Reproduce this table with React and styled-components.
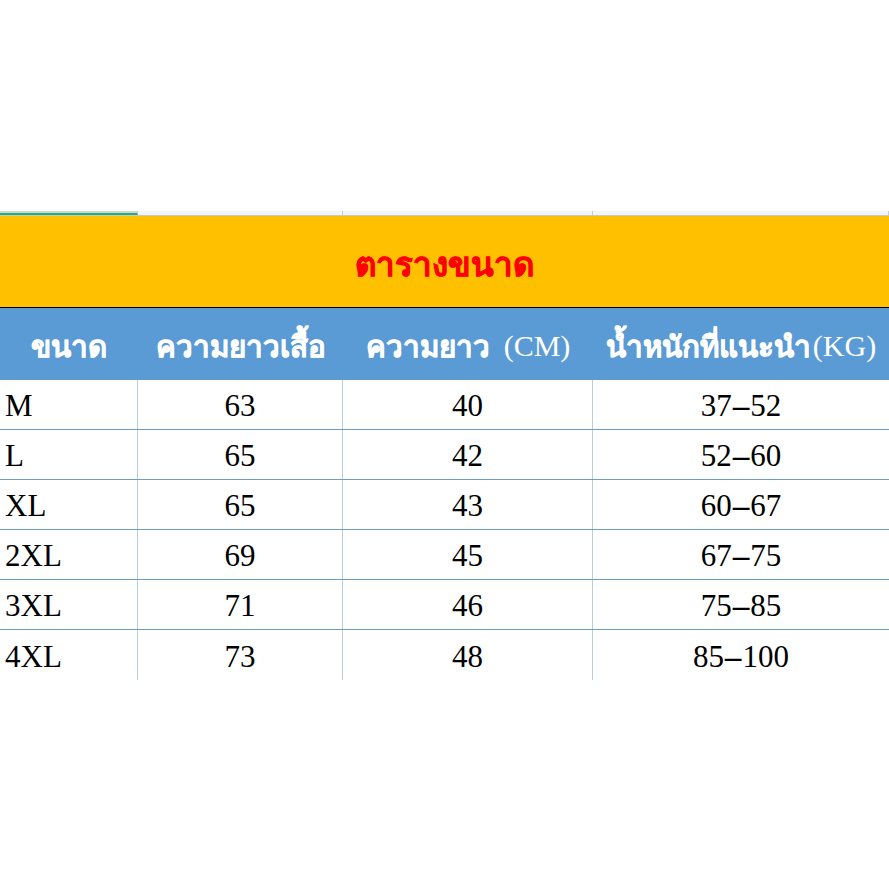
import styled, { createGlobalStyle } from "styled-components"

const GlobalStyle = createGlobalStyle`
  html, body {
    margin: 0;
    padding: 0;
    background: #ffffff;
  }
`

const COLS = "138px 205px 250px 1fr"

const Page = styled.div`
  width: 889px;
  height: 889px;
  padding-top: 211px;
  box-sizing: border-box;
  overflow: hidden;
`

const TabStrip = styled.div`
  display: grid;
  grid-template-columns: ${COLS};
  height: 4px;
  background: #f4f5f7;
  border-bottom: 1px solid #c4c7cd;
`

const TabCell = styled.div`
  border-right: 1px solid #c9ccd2;
  box-sizing: border-box;
  border-bottom: ${(p) => (p.$active ? "2px solid #21b36b" : "none")};
  background: ${(p) => (p.$active ? "#d3d5d9" : "transparent")};
`

const TitleBand = styled.div`
  height: 91px;
  background: #ffc000;
  border-bottom: 1px solid #000000;
  display: flex;
  align-items: center;
  justify-content: center;
`

const Title = styled.h1`
  margin: 0;
  font-family: Tahoma, "Noto Sans", "DejaVu Sans", sans-serif;
  font-weight: 700;
  font-size: 33px;
  color: #ff0000;
  padding-top: 6px;
  -webkit-text-stroke: 0.6px #ff0000;
`

const Row = styled.div`
  display: grid;
  grid-template-columns: ${COLS};
  height: ${(p) => (p.$head ? "72px" : "50px")};
  background: ${(p) => (p.$head ? "#5b9bd5" : "#ffffff")};
  border-bottom: ${(p) => (p.$last || p.$head ? "none" : "1px solid #6f9bc8")};
  box-sizing: border-box;
`

const HeadCell = styled.div`
  display: flex;
  align-items: center;
  justify-content: center;
  color: #ffffff;
  font-family: Tahoma, "Noto Sans", "DejaVu Sans", sans-serif;
  font-weight: 700;
  font-size: 29.5px;
  white-space: nowrap;
  padding-top: 4px;
  -webkit-text-stroke: 0.4px #ffffff;
`

const Paren = styled.span`
  font-family: "Liberation Serif", serif;
  font-weight: 400;
  font-size: 30px;
  -webkit-text-stroke: 0;
  margin-left: ${(p) => p.$gap || "2px"};
`

const Cell = styled.div`
  display: flex;
  align-items: center;
  justify-content: ${(p) => (p.$left ? "flex-start" : "center")};
  padding-left: ${(p) => (p.$left ? "5px" : "0")};
  border-right: ${(p) => (p.$end ? "none" : "1px solid #bccbdd")};
  font-family: "Liberation Serif", "DejaVu Serif", serif;
  font-size: 31px;
  color: #000000;
  padding-top: 3px;
  box-sizing: border-box;
`

const Dash = styled.span`
  display: inline-block;
  margin: 0 4px;
  transform: scaleX(2.1);
`

function Value({ text }) {
  const parts = text.split("-")
  if (parts.length < 2) return text
  return (
    <>
      {parts[0]}
      <Dash>-</Dash>
      {parts[1]}
    </>
  )
}

const rows = [
  ["M", "63", "40", "37-52"],
  ["L", "65", "42", "52-60"],
  ["XL", "65", "43", "60-67"],
  ["2XL", "69", "45", "67-75"],
  ["3XL", "71", "46", "75-85"],
  ["4XL", "73", "48", "85-100"],
]

export default function App() {
  return (
    <Page>
      <GlobalStyle />
      <TabStrip>
        <TabCell $active />
        <TabCell />
        <TabCell />
        <TabCell />
      </TabStrip>
      <TitleBand>
        <Title>ตารางขนาด</Title>
      </TitleBand>
      <Row $head>
        <HeadCell>ขนาด</HeadCell>
        <HeadCell>ความยาวเสื้อ</HeadCell>
        <HeadCell>
          ความยาว<Paren $gap="14px">(CM)</Paren>
        </HeadCell>
        <HeadCell>
          น้ำหนักที่แนะนำ<Paren>(KG)</Paren>
        </HeadCell>
      </Row>
      {rows.map((r, i) => (
        <Row key={r[0]} $last={i === rows.length - 1}>
          <Cell $left>{r[0]}</Cell>
          <Cell>{r[1]}</Cell>
          <Cell>{r[2]}</Cell>
          <Cell $end>
            <Value text={r[3]} />
          </Cell>
        </Row>
      ))}
    </Page>
  )
}
